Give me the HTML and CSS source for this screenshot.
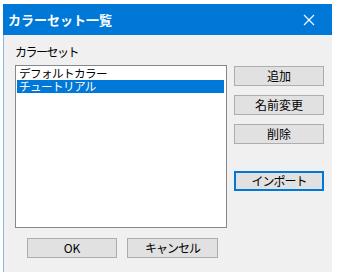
FILE: index.html
```html
<!DOCTYPE html>
<html lang="ja">
<head>
<meta charset="utf-8">
<title>カラーセット一覧</title>
<link rel="stylesheet" href="styles.css">
</head>
<body>
<div class="window">
  <div class="titlebar">
    <span class="title">カラーセット一覧</span>
    <svg class="close" width="12" height="12" viewBox="0 0 12 12"><path d="M1 1 L11 11 M11 1 L1 11" stroke="#fff" stroke-width="1.1" fill="none"/></svg>
  </div>
  <div class="content">
    <div class="left">
      <div class="label">カラーセット</div>
      <div class="listbox">
        <div class="item">デフォルトカラー</div>
        <div class="item selected">チュートリアル</div>
      </div>
      <div class="bottom">
        <button class="btn">OK</button>
        <button class="btn kana">キャンセル</button>
      </div>
    </div>
    <div class="right">
      <button class="btn">追加</button>
      <button class="btn">名前変更</button>
      <button class="btn">削除</button>
      <button class="btn kana focused import">インポート</button>
    </div>
  </div>
</div>
</body>
</html>
```
FILE: styles.css
```css
html, body {
  margin: 0;
  padding: 0;
  background: #ffffff;
}
body {
  font-family: "Noto Sans CJK JP", "Noto Sans", sans-serif;
  font-size: 12px;
  color: #000;
}
.window {
  margin: 4px 0 0 3px;
  width: 329px;
  height: 268px;
  display: flex;
  flex-direction: column;
}
.titlebar {
  height: 31px;
  background: #0078d7;
  color: #fff;
  display: flex;
  align-items: center;
  padding-left: 5px;
  box-sizing: border-box;
  flex: none;
}
.title {
  font-size: 13px;
  font-weight: bold;
  line-height: 16px;
  margin-top: 1px;
}
.close {
  margin-left: auto;
  margin-right: 17px;
  margin-top: 1px;
}
.content {
  flex: 1;
  background: #f0f0f0;
  border-left: 1px solid #8cb8e8;
  display: flex;
}
.left {
  padding: 9px 0 0 11px;
  width: 212px;
  display: flex;
  flex-direction: column;
}
.label {
  line-height: 16px;
  margin-bottom: 5px;
  letter-spacing: -1.5px;
}
.listbox {
  height: 163px;
  box-sizing: border-box;
  background: #fff;
  border: 1px solid #828790;
  padding: 1px 2px 0 1px;
}
.item {
  height: 13px;
  line-height: 13px;
  padding-left: 2px;
  font-family: "Liberation Sans", "Noto Sans CJK JP", sans-serif;
  font-size: 11.6px;
  letter-spacing: -0.6px;
  white-space: nowrap;
  overflow: hidden;
}
.item.selected {
  background: #0078d7;
  color: #fff;
}
.bottom {
  display: flex;
  gap: 10px;
  margin-top: 10px;
  padding-left: 12px;
}
.right {
  margin-left: 7px;
  padding-top: 31px;
  display: flex;
  flex-direction: column;
  gap: 9px;
}
.btn {
  width: 90px;
  height: 20px;
  box-sizing: border-box;
  background: #e1e1e1;
  border: 1px solid #adadad;
  font-family: inherit;
  font-size: 12px;
  line-height: 16px;
  padding: 0;
  color: #000;
}
.bottom .btn:last-child {
  width: 91px;
}
.kana {
  letter-spacing: -1px;
}
.focused {
  border: 2px solid #0078d7;
}
.import {
  margin-top: 18px;
}
```
